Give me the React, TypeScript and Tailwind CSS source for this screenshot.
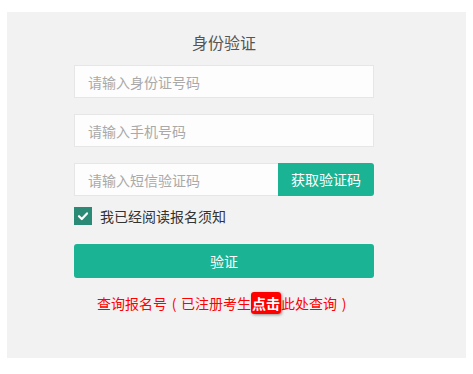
export default function App() {
  return (
    <div className="min-h-screen w-full bg-white pt-3 pl-[7px] font-['Microsoft_YaHei','Noto_Sans_CJK_SC',sans-serif]">
      <div className="h-[346px] w-[459px] bg-[#f2f2f2] pt-[20px]">
        <div className="ml-[67px] w-[300px]">
          <h2 className="text-center text-[16px] leading-[20px] text-[#555]">身份验证</h2>

          <input
            className="mt-[13px] block h-[33px] w-full border border-[#e6e6e6] bg-[#fdfdfd] px-[13px] text-[14px] outline-none placeholder:text-[#a9a9a9]"
            placeholder="请输入身份证号码"
          />
          <input
            className="mt-4 block h-[33px] w-full border border-[#e6e6e6] bg-[#fdfdfd] px-[13px] text-[14px] outline-none placeholder:text-[#a9a9a9]"
            placeholder="请输入手机号码"
          />
          <div className="mt-4 flex h-[33px]">
            <input
              className="h-full min-w-0 flex-1 border border-r-0 border-[#e6e6e6] bg-[#fdfdfd] px-[13px] text-[14px] outline-none placeholder:text-[#a9a9a9]"
              placeholder="请输入短信验证码"
            />
            <button className="h-full w-[96px] rounded-r-[3px] bg-[#1ab394] text-[14px] text-white">
              获取验证码
            </button>
          </div>

          <label className="mt-[10px] flex items-center gap-2">
            <span className="flex h-[18px] w-[18px] items-center justify-center bg-[#2b8a76]">
              <svg width="12" height="12" viewBox="0 0 12 12" fill="none">
                <path d="M2 6.2 4.8 9 10 3.4" stroke="white" strokeWidth="2.2" strokeLinecap="round" strokeLinejoin="round" />
              </svg>
            </span>
            <span className="text-[14px] leading-[20px] text-[#333]">我已经阅读报名须知</span>
          </label>

          <button className="mt-[18px] block h-[34px] w-full rounded-[3px] bg-[#1ab394] text-[14px] text-white">
            验证
          </button>

          <p className="mt-[15px] text-center text-[14px] leading-[20px] text-[#ff0000]">
            查询报名号
            <span className="inline-block w-[14px] text-center">(</span>
            已注册考生
            <span className="rounded-[3px] bg-[#ff0000] px-[1px] py-[1px] font-bold text-white shadow-[1px_1px_3px_rgba(0,0,0,0.4)]">
              点击
            </span>
            此处查询
            <span className="inline-block w-[14px] text-center">)</span>
          </p>
        </div>
      </div>
    </div>
  );
}
